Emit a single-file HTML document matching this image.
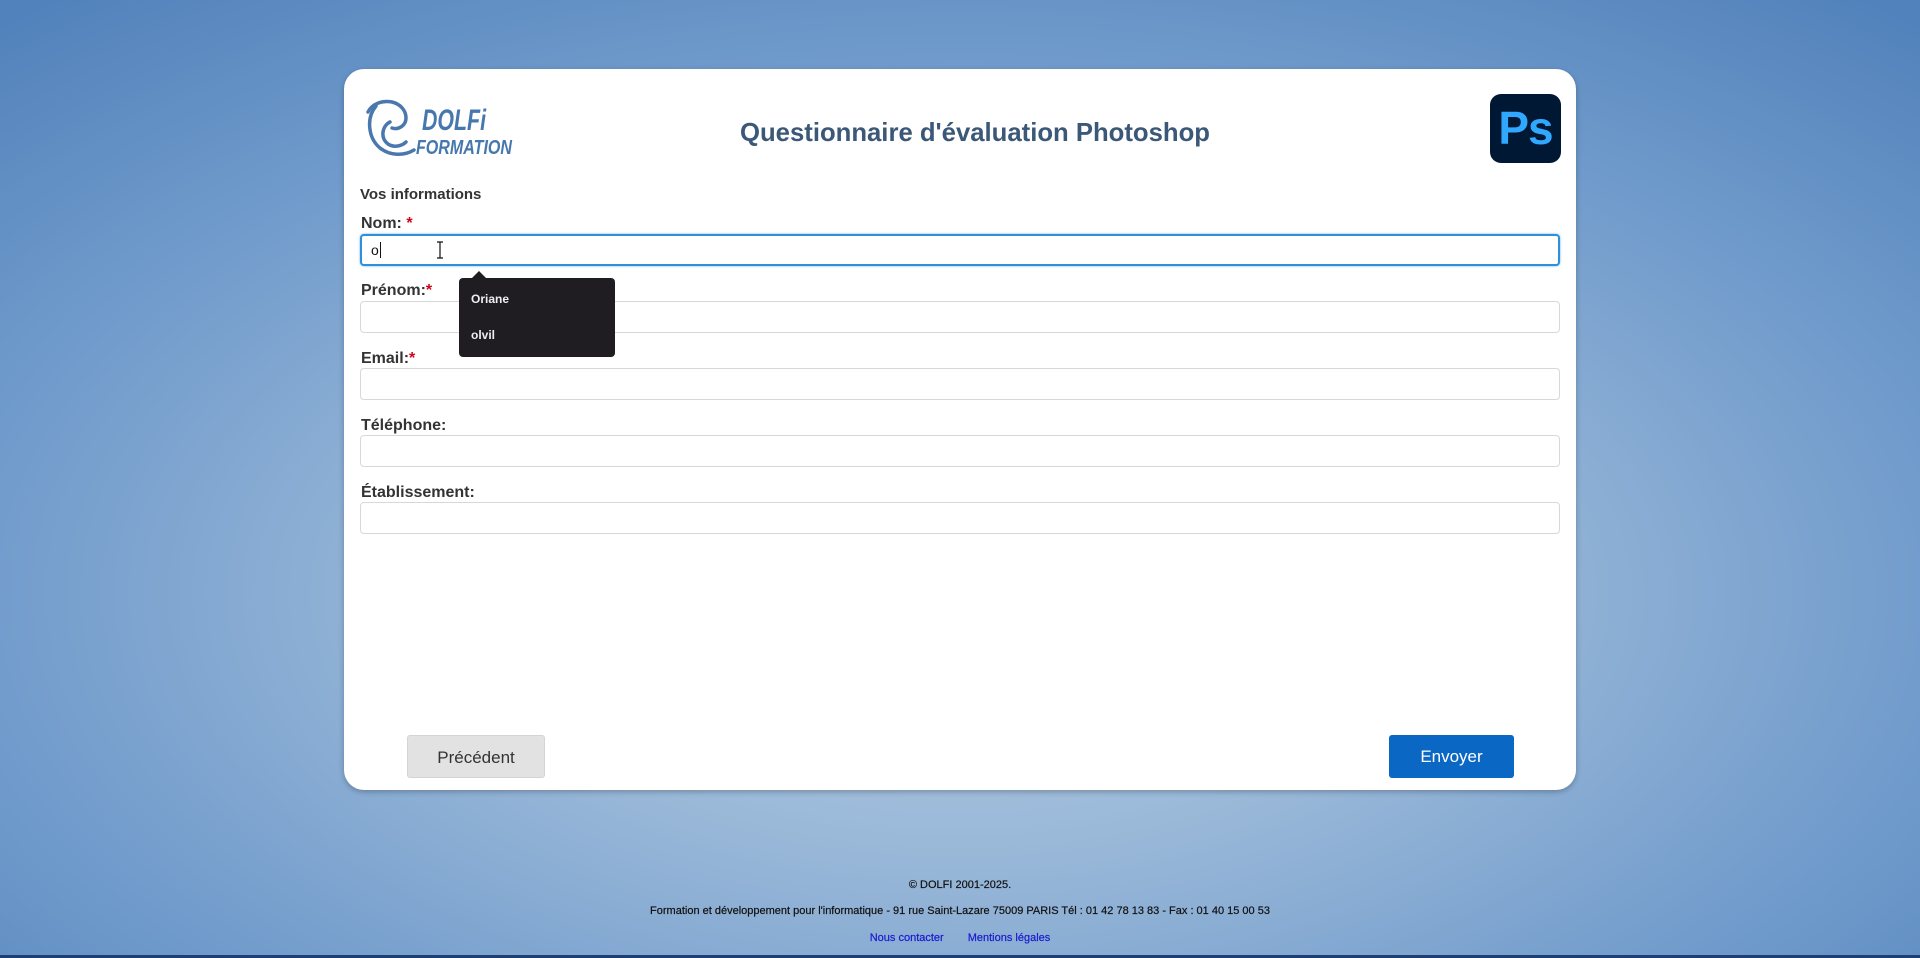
<!DOCTYPE html>
<html lang="fr"><head><meta charset="utf-8"><title>Questionnaire d'évaluation Photoshop</title>
<style>
*{box-sizing:border-box;margin:0;padding:0}
html,body{width:1920px;height:958px;overflow:hidden}
body{font-family:"Liberation Sans",Arial,sans-serif;background:radial-gradient(ellipse 75% 80% at 50% 62%,#b3cbe2 0%,#98b7d8 35%,#6f9acb 70%,#5282bb 100%);position:relative}
.bar{position:absolute;left:0;right:0;bottom:0;height:3px;background:#1e3f73}
.card{position:absolute;left:344px;top:69px;width:1232px;height:721px;background:#fff;border-radius:20px;box-shadow:0 2px 6px rgba(0,0,0,.25)}
.title{position:absolute;left:30px;right:0;top:119px;text-align:center;font-size:25.7px;font-weight:bold;color:#3b5878}
.ps{position:absolute;left:1490px;top:94px;width:71px;height:69px;background:#001834;border-radius:11px;color:#31a8ff;font-weight:bold;font-size:46px;text-align:center;line-height:68px;letter-spacing:-1px}
.sec{position:absolute;left:360px;top:186px;font-size:15px;font-weight:bold;color:#333}
.lbl{position:absolute;left:361px;font-size:16px;font-weight:bold;color:#333}
.lbl span{color:#d0021b}
.inp{position:absolute;left:360px;width:1200px;height:32px;border:1px solid #d8d8d8;border-radius:4px;background:#fff}
.inp.f{border:2px solid #2f8fd8;box-shadow:0 0 2px #6ab0e8}
.dd{position:absolute;left:459px;top:278px;width:156px;height:79px;background:#1f1d22;border-radius:4px;color:#eee;font-size:12px;font-weight:bold}
.dd:before{content:"";position:absolute;left:13px;top:-7px;border:7px solid transparent;border-top:0;border-bottom-color:#1f1d22}
.btn{position:absolute;top:735px;height:43px;font-size:17px;text-align:center;line-height:43px;border-radius:3px}
.foot{position:absolute;left:0;right:0;text-align:center;font-size:11px;color:#111;-webkit-text-stroke:.2px #111}
.foot a{color:#1a1ad0;text-decoration:none;margin:0 12px;-webkit-text-stroke:.2px #1a1ad0}
</style></head><body>
<div class="card"></div>
<svg style="position:absolute;left:362px;top:96px" width="160" height="64" viewBox="0 0 160 64">
<g fill="none" stroke="#4a78ad" stroke-width="3.5" stroke-linecap="round">
<path d="M6 16 C10 8 20 4 30 6 C38 8 44 14 44 22 C44 30 36 34 30 32"/>
<path d="M14 10 C4 22 6 42 18 52 C28 60 42 60 52 54"/>
<path d="M28 26 C20 30 18 42 26 48 C32 52 40 50 44 46"/>
</g>
<text x="60" y="34" font-family="Liberation Sans,sans-serif" font-weight="bold" font-style="italic" font-size="30" fill="#4677ad" textLength="64" lengthAdjust="spacingAndGlyphs">DOLFi</text>
<text x="54" y="58" font-family="Liberation Sans,sans-serif" font-weight="bold" font-style="italic" font-size="20" fill="#4677ad" textLength="96" lengthAdjust="spacingAndGlyphs">FORMATION</text>
</svg>
<div class="title">Questionnaire d'évaluation Photoshop</div>
<div class="ps">Ps</div>
<div class="sec">Vos informations</div>
<div class="lbl" style="top:215px">Nom: <span>*</span></div>
<div class="inp f" style="top:234px"><span style="position:absolute;left:9px;top:6px;font-size:14px;color:#111">o</span><span style="position:absolute;left:18px;top:6px;width:1px;height:16px;background:#111"></span>
<svg style="position:absolute;left:74px;top:5px" width="8" height="18"><path d="M1 1h6M4 1v16M1 17h6" stroke="#111" stroke-width="1.2" fill="none"/></svg></div>
<div class="lbl" style="top:282px">Prénom:<span>*</span></div>
<div class="inp" style="top:301px"></div>
<div class="lbl" style="top:350px">Email:<span>*</span></div>
<div class="inp" style="top:368px"></div>
<div class="lbl" style="top:417px">Téléphone:</div>
<div class="inp" style="top:435px"></div>
<div class="lbl" style="top:484px">Établissement:</div>
<div class="inp" style="top:502px"></div>
<div class="dd"><div style="position:absolute;left:12px;top:14px">Oriane</div><div style="position:absolute;left:12px;top:50px">olvil</div></div>
<div class="btn" style="left:407px;width:138px;background:#e2e2e2;color:#333;border:1px solid #d4d4d4">Précédent</div>
<div class="btn" style="left:1389px;width:125px;background:#0a67c4;color:#fff">Envoyer</div>
<div class="foot" style="top:879px">© DOLFI 2001-2025.</div>
<div class="foot" style="top:905px">Formation et développement pour l'informatique - 91 rue Saint-Lazare 75009 PARIS Tél : 01 42 78 13 83 - Fax : 01 40 15 00 53</div>
<div class="foot" style="top:932px"><a>Nous contacter</a><a>Mentions légales</a></div>
<div class="bar"></div>
</body></html>
